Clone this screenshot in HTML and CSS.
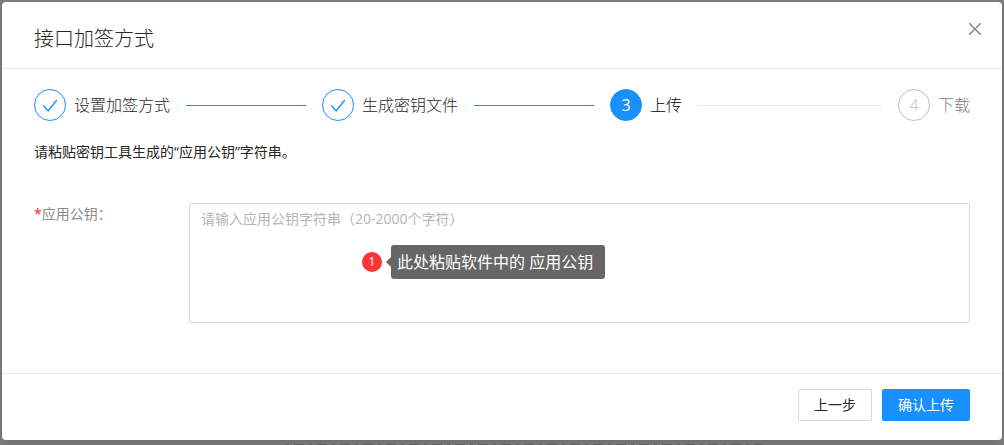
FILE: index.html
```html
<!DOCTYPE html>
<html lang="zh-CN">
<head>
  <meta charset="UTF-8">
  <meta name="viewport" content="width=device-width, initial-scale=1.0">
  <title>接口加签方式</title>
  <link rel="stylesheet" href="styles.css">
</head>
<body>
  <div class="modal" role="dialog" aria-labelledby="modal-title">
    <header class="modal-header">
      <h1 class="modal-title" id="modal-title">接口加签方式</h1>
      <button class="close" type="button" aria-label="关闭">
        <svg width="14" height="14" viewBox="0 0 14 14" fill="none" stroke="currentColor" stroke-width="1.4">
          <path d="M1.2 1.2l11.6 11.6M12.8 1.2L1.2 12.8"/>
        </svg>
      </button>
    </header>

    <main class="modal-body">
      <ol class="steps">
        <li class="step done">
          <span class="step-icon">
            <svg width="16" height="16" viewBox="0 0 16 16" fill="none" stroke="currentColor" stroke-width="1.4">
              <path d="M1.2 8.4l4.9 5.6L14.8 3"/>
            </svg>
          </span>
          <span class="step-title">设置加签方式</span>
        </li>
        <li class="step done">
          <span class="step-icon">
            <svg width="16" height="16" viewBox="0 0 16 16" fill="none" stroke="currentColor" stroke-width="1.4">
              <path d="M1.2 8.4l4.9 5.6L14.8 3"/>
            </svg>
          </span>
          <span class="step-title">生成密钥文件</span>
        </li>
        <li class="step active">
          <span class="step-icon">3</span>
          <span class="step-title">上传</span>
        </li>
        <li class="step wait">
          <span class="step-icon">4</span>
          <span class="step-title">下载</span>
        </li>
      </ol>

      <p class="desc">请粘贴密钥工具生成的“应用公钥”字符串。</p>

      <form class="form-row" id="key-form">
        <label class="form-label" for="public-key"><span class="required">*</span>应用公钥：</label>
        <div class="field">
          <textarea class="key-input" id="public-key" placeholder="请输入应用公钥字符串（20-2000个字符）"></textarea>
          <div class="hint">
            <span class="hint-badge">1</span>
            <span class="hint-text">此处粘贴软件中的 应用公钥</span>
          </div>
        </div>
      </form>
    </main>

    <footer class="modal-footer">
      <button class="btn" type="button">上一步</button>
      <button class="btn primary" type="submit" form="key-form">确认上传</button>
    </footer>
  </div>
  <div class="backdrop-line"></div>
</body>
</html>
```

FILE: styles.css
```css
:root {
  --primary: #1890ff;
  --text: #262626;
  --border: #d9d9d9;
  --split: #e8e8e8;
}

* {
  box-sizing: border-box;
}

body {
  margin: 0;
  padding: 2px 2px 0;
  min-height: 100vh;
  display: flex;
  flex-direction: column;
  overflow: hidden;
  background: #7f7f7f;
  color: var(--text);
  font-family: "Open Sans", "Noto Sans CJK SC", sans-serif;
  font-size: 14px;
  line-height: 22px;
}

.modal {
  background: #fff;
  border-radius: 4px;
  box-shadow: 0 4px 12px rgba(0, 0, 0, 0.15);
}

.modal-header {
  display: flex;
  justify-content: space-between;
  align-items: flex-start;
  padding: 20px 20px 12px 32px;
  border-bottom: 1px solid var(--split);
}

.modal-title {
  margin: 0;
  font-size: 20px;
  font-weight: 300;
  line-height: 34px;
}

.close {
  display: flex;
  padding: 0;
  border: none;
  background: none;
  color: #808080;
  cursor: pointer;
}

.modal-body {
  padding: 20px 32px 50px;
}

/* steps */
.steps {
  display: flex;
  gap: 16px;
  margin: 0;
  padding: 0;
  list-style: none;
}

.step {
  flex: 1;
  display: flex;
  align-items: center;
  gap: 8px;
  font-size: 16px;
  font-weight: 300;
  line-height: 32px;
  white-space: nowrap;
}

.step:last-child {
  flex: none;
}

.step:not(:last-child)::after {
  content: "";
  flex: 1;
  height: 1px;
  margin-left: 8px;
  background: var(--split);
}

.step.done:not(:last-child)::after {
  background: #1f8ae6;
}

.step-icon {
  display: flex;
  justify-content: center;
  align-items: center;
  width: 32px;
  height: 32px;
  border: 1px solid var(--primary);
  border-radius: 50%;
  color: var(--primary);
}

.active .step-icon {
  background: var(--primary);
  color: #fff;
  font-weight: 400;
}

.active .step-title {
  color: #000;
}

.wait .step-icon {
  border-color: #bfbfbf;
  color: #bfbfbf;
}

.wait .step-title {
  color: #808080;
}

.desc {
  margin: 20px 0 40px;
}

/* form */
.form-row {
  display: flex;
}

.form-label {
  width: 155px;
  color: #8c8c8c;
}

.required {
  color: #f5222d;
}

.field {
  position: relative;
  flex: 1;
}

.key-input {
  display: block;
  width: 100%;
  height: 120px;
  padding: 4px 11px;
  border: 1px solid var(--border);
  border-radius: 2px;
  color: var(--text);
  font: inherit;
  resize: none;
}

.key-input::placeholder {
  color: #b5b5b5;
}

.hint {
  position: absolute;
  top: 42px;
  left: 173px;
  display: flex;
  align-items: center;
  gap: 9px;
}

.hint-badge {
  width: 20px;
  height: 20px;
  border-radius: 50%;
  background: #ff3333;
  color: #fff;
  font-size: 12px;
  line-height: 20px;
  text-align: center;
}

.hint-text {
  position: relative;
  padding: 1px 12px 1px 6px;
  border-radius: 3px;
  background: #666;
  color: #fff;
  font-size: 16px;
  line-height: 32px;
  white-space: nowrap;
}

.hint-text::before {
  content: "";
  position: absolute;
  top: 12px;
  left: -5px;
  border: solid transparent;
  border-width: 5px 5px 5px 0;
  border-right-color: #666;
}

/* footer */
.modal-footer {
  display: flex;
  justify-content: flex-end;
  gap: 10px;
  padding: 15px 32px 19px;
  border-top: 1px solid var(--split);
}

.btn {
  padding: 4px 15px;
  border: 1px solid var(--border);
  border-radius: 2px;
  background: #fff;
  color: var(--text);
  font: inherit;
  cursor: pointer;
}

.btn.primary {
  border-color: var(--primary);
  background: var(--primary);
  color: #fff;
}

/* page content showing under the dialog */
.backdrop-line {
  align-self: center;
  width: 476px;
  height: 1px;
  margin: 4px 0 0 44px;
  background: repeating-linear-gradient(90deg, #5c5c5c 0 3px, #7a7a7a 3px 8px, #5c5c5c 8px 18px, #7a7a7a 18px 23px);
}
```
